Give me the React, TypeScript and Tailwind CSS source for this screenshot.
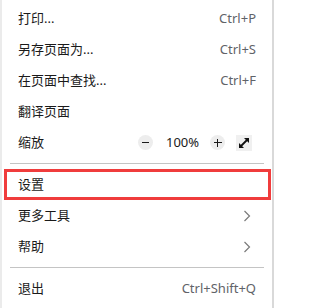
import type { ReactNode } from "react";

const font = { fontFamily: '"Noto Sans", "Noto Sans CJK SC", sans-serif' };

function Row({ label, right }: { label: string; right?: ReactNode }) {
  return (
    <div className="flex h-[31px] items-center justify-between pl-[16px] pr-[16px]">
      <span className="text-[13px] text-[#1a1a1a]">{label}</span>
      {right}
    </div>
  );
}

function Shortcut({ keys }: { keys: string }) {
  return <span className="text-[13px] text-[#5f6368]">{keys}</span>;
}

function Chevron() {
  return (
    <svg width="8" height="12" viewBox="0 0 8 12" className="mr-[5px]">
      <path d="M1.5 1 L6.5 6 L1.5 11" fill="none" stroke="#7a7a7a" strokeWidth="1.2" />
    </svg>
  );
}

function Separator() {
  return <div className="mx-[8px] my-[5px] h-px bg-[#c4c4c4]" />;
}

function ZoomControls() {
  return (
    <div className="mr-[4px] flex items-center">
      <div className="flex h-[15px] w-[15px] items-center justify-center rounded-full bg-[#ededed]">
        <div className="h-[1.5px] w-[7px] bg-[#1a1a1a]" />
      </div>
      <span className="ml-[13px] w-[32px] text-center text-[13px] text-[#1a1a1a]">100%</span>
      <div className="relative ml-[12px] flex h-[15px] w-[15px] items-center justify-center rounded-full bg-[#ededed]">
        <div className="h-[1.5px] w-[8px] bg-[#1a1a1a]" />
        <div className="absolute h-[8px] w-[1.5px] bg-[#1a1a1a]" />
      </div>
      <div className="ml-[11px] flex h-[16px] w-[16px] items-center justify-center bg-[#f0f0f0]">
        <svg width="12" height="12" viewBox="0 0 12 12">
          <path d="M3 9 L9 3" stroke="#111" strokeWidth="1.8" />
          <path d="M6 1 L11 1 L11 6 Z" fill="#111" />
          <path d="M1 6 L1 11 L6 11 Z" fill="#111" />
        </svg>
      </div>
    </div>
  );
}

export default function App() {
  return (
    <div className="h-[308px] w-[275px] bg-white" style={font}>
      <div className="mr-px h-full border-x-2 border-l-[#ebebeb] border-r-[#d9d9d9] pt-[3px]">
        <Row label="打印..." right={<Shortcut keys="Ctrl+P" />} />
        <Row label="另存页面为..." right={<Shortcut keys="Ctrl+S" />} />
        <Row label="在页面中查找..." right={<Shortcut keys="Ctrl+F" />} />
        <Row label="翻译页面" />
        <Row label="缩放" right={<ZoomControls />} />
        <Separator />
        <div className="ml-[2px] mr-px flex h-[31px] items-center border-[3px] border-[#f03c3c] pl-[11px]">
          <span className="text-[13px] text-[#1a1a1a]">设置</span>
        </div>
        <Row label="更多工具" right={<Chevron />} />
        <Row label="帮助" right={<Chevron />} />
        <Separator />
        <Row label="退出" right={<Shortcut keys="Ctrl+Shift+Q" />} />
      </div>
    </div>
  );
}
